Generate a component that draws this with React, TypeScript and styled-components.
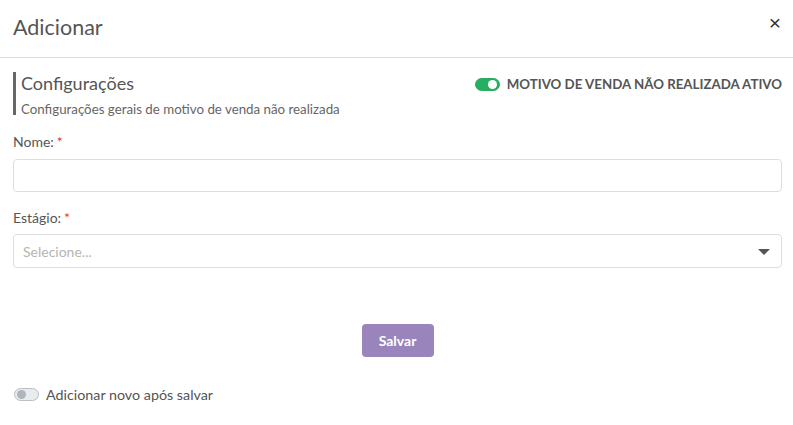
import React from "react";
import styled, { createGlobalStyle } from "styled-components";

const Global = createGlobalStyle`
  html, body { margin: 0; padding: 0; background: #fff; }
  body { font-family: Lato, "Open Sans", Arial, sans-serif; color: #555; }
  * { box-sizing: border-box; }
`;

const Modal = styled.div`
  width: 793px;
  height: 425px;
  background: #fff;
  display: flex;
  flex-direction: column;
`;

const Header = styled.div`
  height: 58px;
  border-bottom: 1px solid #dedede;
  display: flex;
  align-items: center;
  justify-content: space-between;
  padding: 0 12px 4px 13px;
`;

const Title = styled.h1`
  margin: 0;
  font-size: 21.5px;
  font-weight: 400;
  color: #555;
`;

const Close = styled.button`
  border: 0;
  background: none;
  padding: 0;
  font-size: 21px;
  line-height: 1;
  color: #333;
  cursor: pointer;
  margin-top: -8px;
`;

const Body = styled.div`
  padding: 14px 11px 0 13px;
  display: flex;
  flex-direction: column;
`;

const SectionRow = styled.div`
  display: flex;
  justify-content: space-between;
  align-items: flex-start;
`;

const Section = styled.div`
  border-left: 3px solid #666;
  padding-left: 5px;
  height: 43px;
  display: flex;
  flex-direction: column;
`;

const SectionTitle = styled.div`
  font-size: 18px;
  line-height: 22px;
  color: #555;
`;

const SectionSub = styled.div`
  font-size: 13.3px;
  line-height: 18px;
  margin-top: 6px;
  color: #666;
`;

const SwitchRow = styled.label<{ $bold?: boolean }>`
  display: flex;
  align-items: center;
  gap: 7px;
  margin-top: 4px;
  font-size: 13.3px;
  color: #555;
  font-weight: ${(p) => (p.$bold ? 700 : 400)};
`;

const Track = styled.span<{ $on?: boolean }>`
  width: 25px;
  height: 13px;
  border-radius: 7px;
  position: relative;
  background: ${(p) => (p.$on ? "#27ae60" : "#e9ecef")};
  border: 1px solid ${(p) => (p.$on ? "#27ae60" : "#b8bec4")};
  flex: none;
  &::after {
    content: "";
    position: absolute;
    top: 1px;
    ${(p) => (p.$on ? "right: 2px;" : "left: 2px;")}
    width: 9px;
    height: 9px;
    border-radius: 50%;
    background: ${(p) => (p.$on ? "#fff" : "#adb5bd")};
  }
`;

const Label = styled.div<{ $top: number }>`
  margin-top: ${(p) => p.$top}px;
  font-size: 14px;
  line-height: 18px;
  color: #555;
`;

const Req = styled.span`
  color: #e3342f;
  margin-left: 3px;
`;

const Input = styled.input`
  margin-top: 8px;
  height: 33px;
  width: 100%;
  border: 1px solid #dedede;
  border-radius: 4px;
  padding: 0 10px;
  font-family: inherit;
  font-size: 14px;
  outline: none;
`;

const Select = styled.div`
  margin-top: 7px;
  height: 34px;
  border: 1px solid #dedede;
  border-radius: 4px;
  padding: 0 11px 0 9px;
  display: flex;
  align-items: center;
  justify-content: space-between;
  font-size: 14px;
  color: #b5b5b5;
`;

const Caret = styled.span`
  width: 0;
  height: 0;
  border-left: 6px solid transparent;
  border-right: 6px solid transparent;
  border-top: 6px solid #555;
  margin-top: 2px;
`;

const Footer = styled.div`
  margin-top: 56px;
  display: flex;
  justify-content: center;
`;

const Button = styled.button`
  width: 72px;
  height: 33px;
  border: 0;
  border-radius: 4px;
  background: #9985bc;
  color: #fff;
  font-family: inherit;
  font-weight: 700;
  font-size: 14px;
`;

const Bottom = styled(SwitchRow)`
  margin-top: 29px;
  margin-left: 1px;
  font-size: 14.3px;
`;

export default function App() {
  return (
    <>
      <Global />
      <Modal>
        <Header>
          <Title>Adicionar</Title>
          <Close aria-label="Fechar">×</Close>
        </Header>
        <Body>
          <SectionRow>
            <Section>
              <SectionTitle>Configurações</SectionTitle>
              <SectionSub>Configurações gerais de motivo de venda não realizada</SectionSub>
            </Section>
            <SwitchRow $bold>
              <Track $on />
              MOTIVO DE VENDA NÃO REALIZADA ATIVO
            </SwitchRow>
          </SectionRow>
          <Label $top={18}>
            Nome:<Req>*</Req>
          </Label>
          <Input />
          <Label $top={17}>
            Estágio:<Req>*</Req>
          </Label>
          <Select>
            <span>Selecione...</span>
            <Caret />
          </Select>
          <Footer>
            <Button>Salvar</Button>
          </Footer>
          <Bottom>
            <Track />
            Adicionar novo após salvar
          </Bottom>
        </Body>
      </Modal>
    </>
  );
}
